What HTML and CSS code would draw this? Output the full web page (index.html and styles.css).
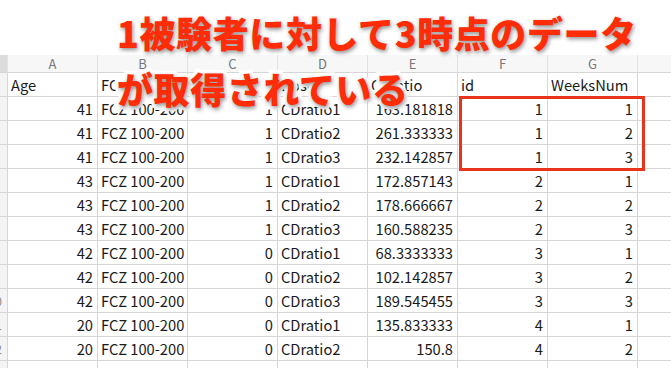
FILE: index.html
```html
<!DOCTYPE html>
<html lang="ja">
<head>
<meta charset="utf-8">
<link rel="stylesheet" href="styles.css">
</head>
<body>
<div class="page">
  <div class="sheet">
    <div class="row head">
      <div class="c corner"></div>
      <div class="c">A</div><div class="c">B</div><div class="c">C</div><div class="c">D</div><div class="c">E</div><div class="c">F</div><div class="c">G</div><div class="c last"></div>
    </div>
    <div class="row">
      <div class="c rn"></div>
      <div class="c">Age</div><div class="c">FCZ</div><div class="c">Sex</div><div class="c">Dose</div><div class="c">CDratio</div><div class="c">id</div><div class="c">WeeksNum</div><div class="c last"></div>
    </div>
    <div class="row"><div class="c rn"></div><div class="c r">41</div><div class="c">FCZ 100-200</div><div class="c r">1</div><div class="c">CDratio1</div><div class="c r">163.181818</div><div class="c r">1</div><div class="c r">1</div><div class="c last"></div></div>
    <div class="row"><div class="c rn"></div><div class="c r">41</div><div class="c">FCZ 100-200</div><div class="c r">1</div><div class="c">CDratio2</div><div class="c r">261.333333</div><div class="c r">1</div><div class="c r">2</div><div class="c last"></div></div>
    <div class="row"><div class="c rn"></div><div class="c r">41</div><div class="c">FCZ 100-200</div><div class="c r">1</div><div class="c">CDratio3</div><div class="c r">232.142857</div><div class="c r">1</div><div class="c r">3</div><div class="c last"></div></div>
    <div class="row"><div class="c rn"></div><div class="c r">43</div><div class="c">FCZ 100-200</div><div class="c r">1</div><div class="c">CDratio1</div><div class="c r">172.857143</div><div class="c r">2</div><div class="c r">1</div><div class="c last"></div></div>
    <div class="row"><div class="c rn"></div><div class="c r">43</div><div class="c">FCZ 100-200</div><div class="c r">1</div><div class="c">CDratio2</div><div class="c r">178.666667</div><div class="c r">2</div><div class="c r">2</div><div class="c last"></div></div>
    <div class="row"><div class="c rn"></div><div class="c r">43</div><div class="c">FCZ 100-200</div><div class="c r">1</div><div class="c">CDratio3</div><div class="c r">160.588235</div><div class="c r">2</div><div class="c r">3</div><div class="c last"></div></div>
    <div class="row"><div class="c rn"></div><div class="c r">42</div><div class="c">FCZ 100-200</div><div class="c r">0</div><div class="c">CDratio1</div><div class="c r">68.3333333</div><div class="c r">3</div><div class="c r">1</div><div class="c last"></div></div>
    <div class="row"><div class="c rn"></div><div class="c r">42</div><div class="c">FCZ 100-200</div><div class="c r">0</div><div class="c">CDratio2</div><div class="c r">102.142857</div><div class="c r">3</div><div class="c r">2</div><div class="c last"></div></div>
    <div class="row"><div class="c rn">10</div><div class="c r">42</div><div class="c">FCZ 100-200</div><div class="c r">0</div><div class="c">CDratio3</div><div class="c r">189.545455</div><div class="c r">3</div><div class="c r">3</div><div class="c last"></div></div>
    <div class="row"><div class="c rn">11</div><div class="c r">20</div><div class="c">FCZ 100-200</div><div class="c r">0</div><div class="c">CDratio1</div><div class="c r">135.833333</div><div class="c r">4</div><div class="c r">1</div><div class="c last"></div></div>
    <div class="row"><div class="c rn">12</div><div class="c r">20</div><div class="c">FCZ 100-200</div><div class="c r">0</div><div class="c">CDratio2</div><div class="c r">150.8</div><div class="c r">4</div><div class="c r">2</div><div class="c last"></div></div>
    <div class="row"><div class="c rn">13</div><div class="c r"></div><div class="c"></div><div class="c r"></div><div class="c"></div><div class="c r"></div><div class="c r"></div><div class="c r"></div><div class="c last"></div></div>
    <div class="highlight"></div>
  </div>
  <div class="caption">
    <div class="line">1被験者に対して3時点のデータ</div>
    <div class="line">が取得されている</div>
  </div>
</div>
</body>
</html>
```

FILE: styles.css
```css
html, body {
  margin: 0;
  padding: 0;
  background: #ffffff;
  overflow: hidden;
}
.page {
  position: relative;
  width: 671px;
  height: 368px;
  overflow: hidden;
  padding-top: 55px;
  box-sizing: border-box;
}
.sheet {
  position: relative;
  font-family: "Noto Sans CJK JP", "Noto Sans", sans-serif;
  font-size: 14.7px;
  color: #1a1a1a;
}
.row {
  display: grid;
  grid-template-columns: 8px repeat(7, 90px) 1fr;
  height: 24px;
}
.c {
  box-sizing: border-box;
  border-right: 1px solid #d6d6d6;
  border-bottom: 1px solid #d6d6d6;
  padding: 0 3px;
  line-height: 23px;
  white-space: nowrap;
  overflow: hidden;
}
.c.r {
  text-align: right;
  padding-right: 4px;
}
.c.last {
  border-right: none;
}
.c.rn {
  background: #f4f4f4;
  padding: 0;
  display: flex;
  justify-content: flex-end;
  color: #888888;
  font-size: 12px;
  padding-right: 5px;
}
.row.head {
  height: 18px;
}
.row.head .c {
  background: #f7f7f7;
  color: #777777;
  text-align: center;
  line-height: 17px;
  font-size: 13px;
  border-right-color: #e2e2e2;
}
.row.head .c.corner {
  background: #dcdcdc;
}
.highlight {
  position: absolute;
  left: 459px;
  top: 41px;
  width: 186px;
  height: 75px;
  box-sizing: border-box;
  border: 3px solid #e8341c;
}
.caption {
  position: absolute;
  left: 117px;
  top: 4px;
  font-family: "Noto Sans CJK JP", sans-serif;
  font-weight: 900;
  font-size: 36px;
  line-height: 56px;
  color: #ff2c08;
  -webkit-text-stroke: 7px #ffffff;
  paint-order: stroke fill;
  text-shadow: 1px 2px 4px rgba(0, 0, 0, 0.45);
  letter-spacing: 0.6px;
  white-space: nowrap;
}
```
